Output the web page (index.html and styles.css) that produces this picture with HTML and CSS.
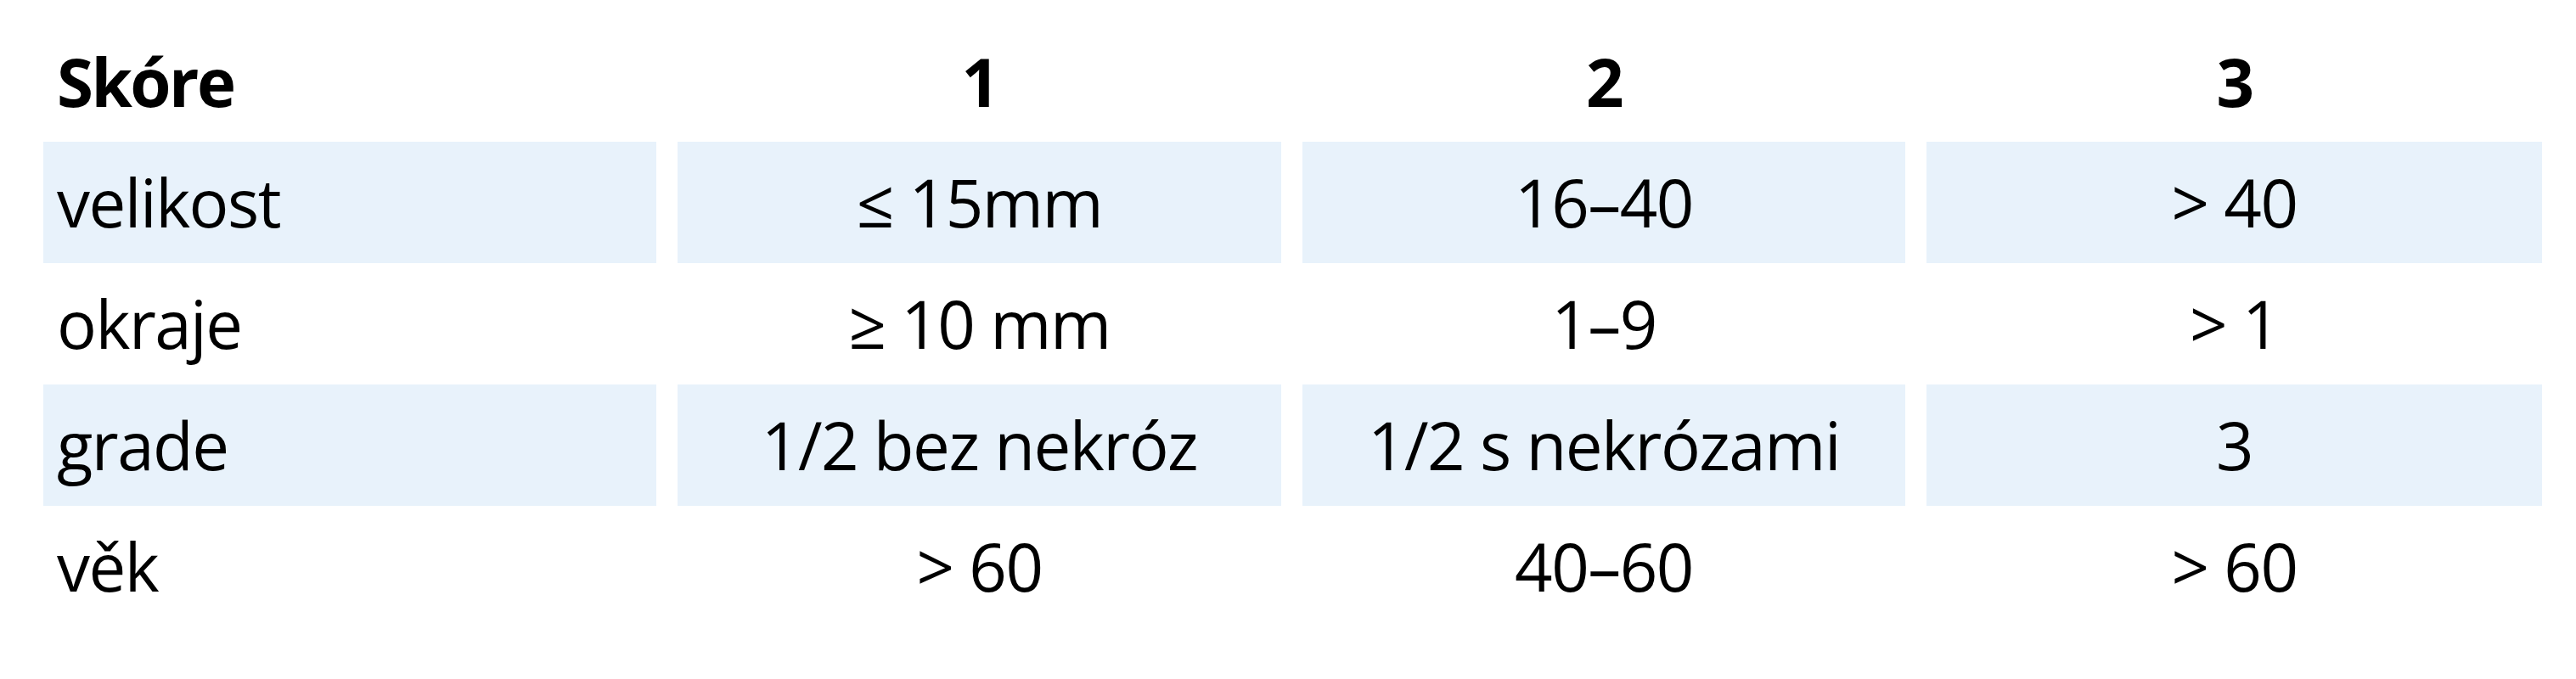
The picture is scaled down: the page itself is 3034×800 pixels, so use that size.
FILE: index.html
```html
<!DOCTYPE html>
<html lang="cs">
<head>
<meta charset="utf-8">
<title>Skóre</title>
<link rel="stylesheet" href="styles.css">
</head>
<body>
<div class="score-table">
  <div class="cell head label">Skóre</div>
  <div class="cell head">1</div>
  <div class="cell head">2</div>
  <div class="cell head">3</div>

  <div class="cell band label">velikost</div>
  <div class="cell band">≤ 15mm</div>
  <div class="cell band">16–40</div>
  <div class="cell band">&gt; 40</div>

  <div class="cell label">okraje</div>
  <div class="cell">≥ 10 mm</div>
  <div class="cell">1–9</div>
  <div class="cell">&gt; 1</div>

  <div class="cell band label">grade</div>
  <div class="cell band">1/2 bez nekróz</div>
  <div class="cell band">1/2 s nekrózami</div>
  <div class="cell band">3</div>

  <div class="cell label">věk</div>
  <div class="cell">&gt; 60</div>
  <div class="cell">40–60</div>
  <div class="cell">&gt; 60</div>
</div>
</body>
</html>
```
FILE: styles.css
```css
html, body {
  margin: 0;
  padding: 0;
  background: #ffffff;
}

body {
  font-family: "Open Sans", "Noto Sans", sans-serif;
  color: #000000;
}

.score-table {
  display: grid;
  grid-template-columns: 722px 711px 710px 725px;
  grid-auto-rows: 143px;
  column-gap: 25px;
  padding: 24px 0 0 51px;
}

.cell {
  display: flex;
  align-items: center;
  justify-content: center;
  font-size: 78px;
  line-height: 1;
  letter-spacing: -1.5px;
  padding-bottom: 2px;
  box-sizing: border-box;
  white-space: nowrap;
}

.cell.label {
  justify-content: flex-start;
  padding-left: 16px;
}

.cell.head {
  font-weight: 700;
  letter-spacing: -2.5px;
  padding-bottom: 0;
}

.cell.band {
  background: #e8f2fb;
}
```
